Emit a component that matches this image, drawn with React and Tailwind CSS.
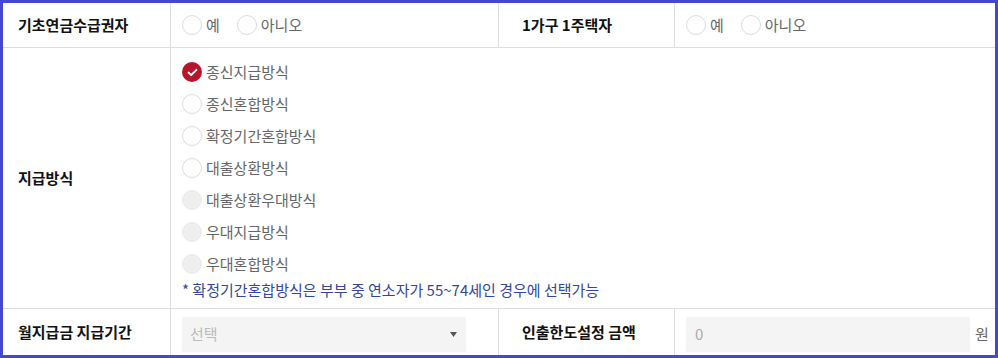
import React, { useState } from "react";

const font = { fontFamily: '"Noto Sans CJK KR", "Noto Sans", sans-serif' };

const Radio = ({ label, checked, disabled, onClick }) => (
    <label className="flex items-center gap-[4px] h-5 cursor-pointer" onClick={onClick}>
        {checked ? (
            <span className="w-5 h-5 rounded-full bg-[#b5162b] flex items-center justify-center">
                <svg width="11" height="9" viewBox="0 0 11 9" fill="none">
                    <path d="M1.5 4.5 L4.2 7 L9.5 1.8" stroke="#fff" strokeWidth="1.8" strokeLinecap="round" strokeLinejoin="round" />
                </svg>
            </span>
        ) : (
            <span
                className={
                    disabled
                        ? "w-5 h-5 rounded-full bg-[#efefef] border border-[#ebebeb]"
                        : "w-5 h-5 rounded-full bg-white border border-[#dcdcdc]"
                }
            />
        )}
        <span className="text-[15px] leading-5 text-[#666]">{label}</span>
    </label>
);

const options = [
    { label: "종신지급방식" },
    { label: "종신혼합방식" },
    { label: "확정기간혼합방식" },
    { label: "대출상환방식" },
    { label: "대출상환우대방식", disabled: true },
    { label: "우대지급방식", disabled: true },
    { label: "우대혼합방식", disabled: true },
];

const App = () => {
    const [method, setMethod] = useState("종신지급방식");
    const [pension, setPension] = useState(null);
    const [house, setHouse] = useState(null);

    return (
        <div className="w-[998px] h-[358px] bg-white border-[3px] border-[#4448cc] overflow-hidden" style={font}>
            <div className="grid grid-cols-[168px_328px_176px_1fr]">
                {/* row 1 */}
                <div className="h-[45px] flex items-center pl-[15px] border-r border-b border-[#dddddd] text-[15px] font-bold text-[#111]">
                    기초연금수급권자
                </div>
                <div className="h-[45px] flex items-center pl-[11px] gap-[17px] border-r border-b border-[#dddddd]">
                    <Radio label="예" checked={pension === "y"} onClick={() => setPension("y")} />
                    <Radio label="아니오" checked={pension === "n"} onClick={() => setPension("n")} />
                </div>
                <div className="h-[45px] flex items-center pl-[23px] border-r border-b border-[#dddddd] text-[15px] font-bold text-[#111]">
                    1가구 1주택자
                </div>
                <div className="h-[45px] flex items-center pl-[11px] gap-[17px] border-b border-[#dddddd]">
                    <Radio label="예" checked={house === "y"} onClick={() => setHouse("y")} />
                    <Radio label="아니오" checked={house === "n"} onClick={() => setHouse("n")} />
                </div>

                {/* row 2 */}
                <div className="h-[261px] flex items-center pl-[15px] border-r border-b border-[#dddddd] text-[15px] font-bold text-[#111]">
                    지급방식
                </div>
                <div className="col-span-3 h-[261px] pl-[11px] pt-[14px] border-b border-[#dddddd]">
                    <div className="flex flex-col gap-3">
                        {options.map((o) => (
                            <Radio
                                key={o.label}
                                label={o.label}
                                disabled={o.disabled}
                                checked={method === o.label}
                                onClick={() => !o.disabled && setMethod(o.label)}
                            />
                        ))}
                    </div>
                    <p className="mt-[6px] text-[15px] leading-5 text-[#33479a]">
                        * 확정기간혼합방식은 부부 중 연소자가 55~74세인 경우에 선택가능
                    </p>
                </div>

                {/* row 3 */}
                <div className="h-[46px] flex items-center pl-[15px] border-r border-[#dddddd] text-[15px] font-bold text-[#111]">
                    월지급금 지급기간
                </div>
                <div className="h-[46px] flex items-center pl-[11px] pt-[5px] border-r border-[#dddddd]">
                    <div className="w-[284px] h-[35px] bg-[#f4f4f4] flex items-center justify-between pl-[8px] pr-[9px]">
                        <span className="text-[15px] text-[#bbbbbb]">선택</span>
                        <svg width="7" height="5" viewBox="0 0 7 5">
                            <path d="M0 0 H7 L3.5 5 Z" fill="#555" />
                        </svg>
                    </div>
                </div>
                <div className="h-[46px] flex items-center pl-[23px] border-r border-[#dddddd] text-[15px] font-bold text-[#111]">
                    인출한도설정 금액
                </div>
                <div className="h-[46px] flex items-center pl-[11px] pt-[5px] gap-[5px]">
                    <div className="w-[284px] h-[35px] bg-[#f4f4f4] flex items-center pl-[9px]">
                        <span className="text-[15px] text-[#aaaaaa]">0</span>
                    </div>
                    <span className="text-[15px] text-[#666]">원</span>
                </div>
            </div>
        </div>
    );
};

export default App;
